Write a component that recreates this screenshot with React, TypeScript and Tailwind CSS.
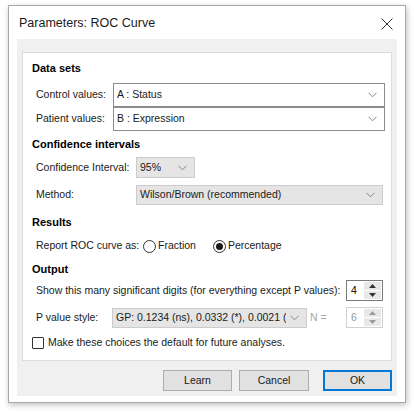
import React from 'react'

const font = { fontFamily: '"Liberation Sans", Arial, sans-serif' }

function Chevron({ className = '' }: { className?: string }) {
    return (
        <svg width="9" height="6" viewBox="0 0 9 6" className={className}>
            <path d="M0.5 0.8 L4.5 4.8 L8.5 0.8" fill="none" stroke="#7a7a7a" strokeWidth="0.9" />
        </svg>
    )
}

function Select({ value, className, disabled }: { value: string, className: string, disabled?: boolean }) {
    return (
        <div className={`flex items-center justify-between border ${disabled ? 'bg-[#e5e5e5] border-[#cccccc]' : 'bg-white border-[#8c8c8c]'} ${className}`}>
            <span className="pl-[3px] whitespace-nowrap overflow-hidden text-[#1a1a1a]">{value}</span>
            <Chevron className="mr-[7px] shrink-0" />
        </div>
    )
}

function Spinner({ value, disabled }: { value: string, disabled?: boolean }) {
    const arrow = disabled ? '#9a9a9a' : '#333333'
    return (
        <div className={`flex w-[37px] h-[21px] border bg-white ${disabled ? 'border-[#d0d0d0]' : 'border-[#7a7a7a]'}`}>
            <span className={`flex-1 pl-[4px] leading-[19px] ${disabled ? 'text-[#9a9a9a]' : 'text-black'}`}>{value}</span>
            <div className="flex flex-col w-[17px] my-[1px] mr-[1px] bg-[#e8e8e8]">
                <div className="flex-1 flex items-center justify-center border-b border-white">
                    <svg width="7" height="4" viewBox="0 0 7 4"><path d="M0 4 L3.5 0 L7 4 Z" fill={arrow} /></svg>
                </div>
                <div className="flex-1 flex items-center justify-center">
                    <svg width="7" height="4" viewBox="0 0 7 4"><path d="M0 0 L3.5 4 L7 0 Z" fill={arrow} /></svg>
                </div>
            </div>
        </div>
    )
}

function Radio({ checked, label }: { checked?: boolean, label: string }) {
    return (
        <div className="flex items-center">
            <div className="w-[13px] h-[13px] rounded-full border border-[#333333] bg-white flex items-center justify-center">
                {checked && <div className="w-[7px] h-[7px] rounded-full bg-[#1a1a1a]" />}
            </div>
            <span className="ml-[2px] text-[#1a1a1a]">{label}</span>
        </div>
    )
}

function Header({ children, className }: { children: React.ReactNode, className: string }) {
    return <div className={`pl-[9px] h-[16px] flex items-center font-bold text-[11px] text-black ${className}`}>{children}</div>
}

export default function App() {
    return (
        <div className="w-[414px] h-[414px] bg-white pt-[5px] pl-[8px] text-[10.5px]" style={font}>
            <div className="w-[398px] h-[398px] bg-white border border-[#a8a8a8] shadow-[1px_2px_6px_rgba(0,0,0,0.25)] flex flex-col">
                {/* Title bar */}
                <div className="h-[33px] flex items-center justify-between pl-[10px] pr-[12px] pt-[2px]">
                    <span className="text-[12.5px] text-[#1a1a1a]">Parameters: ROC Curve</span>
                    <svg width="12" height="12" viewBox="0 0 12 12">
                        <path d="M0.5 0.5 L11.5 11.5 M11.5 0.5 L0.5 11.5" stroke="#333333" strokeWidth="1" />
                    </svg>
                </div>

                <div className="mx-[8px] bg-[#f0f0f0] flex flex-col px-[5px] pt-[13px] pb-[5px]">
                    {/* Settings panel */}
                    <div className="bg-white border border-[#dcdcdc] flex flex-col pb-[9px]">
                        <Header className="mt-[7px]">Data sets</Header>
                        <div className="mt-[7px] flex items-center pl-[13px] pr-[6px] h-[24px]">
                            <span className="w-[77px] text-[#1a1a1a]">Control values:</span>
                            <Select value="A : Status" className="flex-1 h-[24px]" />
                        </div>
                        <div className="flex items-center pl-[13px] pr-[6px] h-[24px]">
                            <span className="w-[77px] text-[#1a1a1a]">Patient values:</span>
                            <Select value="B : Expression" className="flex-1 h-[24px]" />
                        </div>

                        <Header className="mt-[5px]">Confidence intervals</Header>
                        <div className="mt-[5px] flex items-center pl-[13px] h-[21px]">
                            <span className="w-[100px] text-[#1a1a1a]">Confidence Interval:</span>
                            <Select value="95%" disabled className="w-[59px] h-[21px]" />
                        </div>
                        <div className="mt-[7px] flex items-center pl-[13px] pr-[8px] h-[20px]">
                            <span className="w-[100px] text-[#1a1a1a]">Method:</span>
                            <Select value="Wilson/Brown (recommended)" disabled className="flex-1 h-[20px]" />
                        </div>

                        <Header className="mt-[9px]">Results</Header>
                        <div className="mt-[7px] flex items-center pl-[13px] h-[18px]">
                            <span className="w-[107px] text-[#1a1a1a]">Report ROC curve as:</span>
                            <Radio label="Fraction" />
                            <div className="ml-[17px]"><Radio checked label="Percentage" /></div>
                        </div>

                        <Header className="mt-[6px]">Output</Header>
                        <div className="mt-[3px] flex items-center justify-between pl-[13px] pr-[8px] h-[21px]">
                            <span className="text-[#1a1a1a]">Show this many significant digits (for everything except P values):</span>
                            <Spinner value="4" />
                        </div>
                        <div className="mt-[6px] flex items-center pl-[13px] pr-[8px] h-[21px]">
                            <span className="w-[76px] text-[#1a1a1a]">P value style:</span>
                            <Select value="GP: 0.1234 (ns), 0.0332 (*), 0.0021 (" disabled className="w-[195px] h-[20px]" />
                            <span className="ml-[3px] text-[#a6a6a6]">N =</span>
                            <div className="ml-auto"><Spinner value="6" disabled /></div>
                        </div>
                        <div className="mt-[7px] flex items-center pl-[9px] h-[16px]">
                            <div className="w-[12px] h-[12px] border border-[#333333] bg-white rounded-[1px]" />
                            <span className="ml-[4px] text-[#1a1a1a]">Make these choices the default for future analyses.</span>
                        </div>
                    </div>

                    {/* Buttons */}
                    <div className="mt-[9px] flex justify-end gap-[7px]">
                        <button className="w-[69px] h-[21px] bg-[#e1e1e1] border border-[#adadad] text-[#1a1a1a]">Learn</button>
                        <button className="w-[70px] h-[21px] bg-[#e1e1e1] border border-[#adadad] text-[#1a1a1a] mr-[7px]">Cancel</button>
                        <button className="w-[69px] h-[21px] bg-[#e1e1e1] border-2 border-[#0078d7] text-[#1a1a1a]">OK</button>
                    </div>
                </div>
            </div>
        </div>
    )
}
